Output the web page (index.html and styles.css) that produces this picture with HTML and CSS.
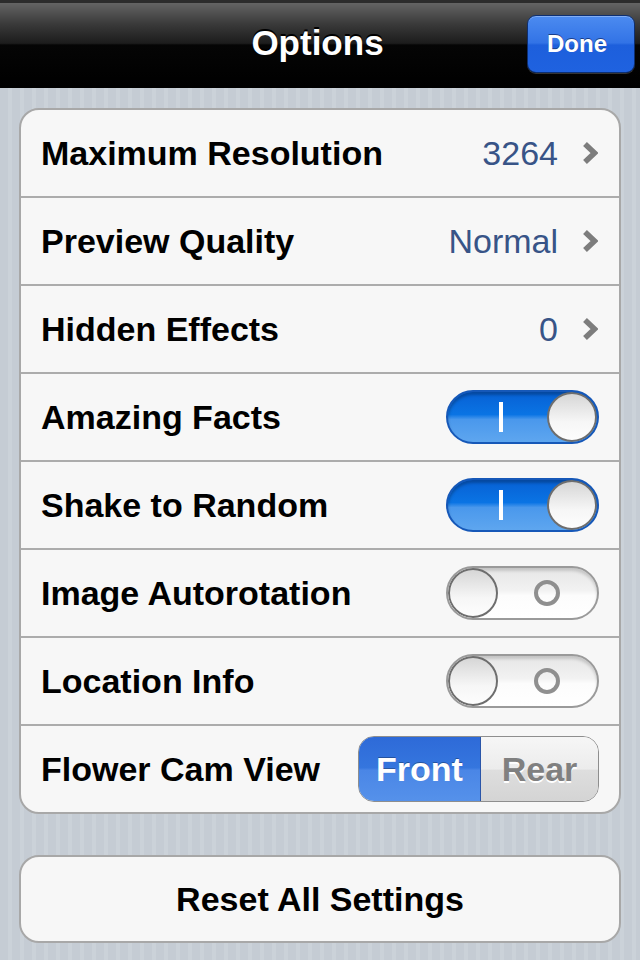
FILE: index.html
```html
<!DOCTYPE html>
<html lang="en">
<head>
<meta charset="utf-8">
<title>Options</title>
<link rel="stylesheet" href="styles.css">
</head>
<body>

<header class="navbar">
	<span></span>
	<h1 class="navbar-title">Options</h1>
	<button class="navbar-done">Done</button>
</header>

<main class="content">
	<ul class="group">
		<li class="row">
			<span class="row-label">Maximum Resolution</span>
			<span class="row-value">3264</span>
			<svg class="chevron" width="16" height="24" viewBox="0 0 16 24"><polyline points="3,3 12.5,12 3,21" fill="none" stroke="#7d7d7d" stroke-width="5.5"/></svg>
		</li>
		<li class="row">
			<span class="row-label">Preview Quality</span>
			<span class="row-value">Normal</span>
			<svg class="chevron" width="16" height="24" viewBox="0 0 16 24"><polyline points="3,3 12.5,12 3,21" fill="none" stroke="#7d7d7d" stroke-width="5.5"/></svg>
		</li>
		<li class="row">
			<span class="row-label">Hidden Effects</span>
			<span class="row-value">0</span>
			<svg class="chevron" width="16" height="24" viewBox="0 0 16 24"><polyline points="3,3 12.5,12 3,21" fill="none" stroke="#7d7d7d" stroke-width="5.5"/></svg>
		</li>
		<li class="row">
			<span class="row-label">Amazing Facts</span>
			<span class="switch on"><span class="switch-mark"></span><span class="switch-knob"></span></span>
		</li>
		<li class="row">
			<span class="row-label">Shake to Random</span>
			<span class="switch on"><span class="switch-mark"></span><span class="switch-knob"></span></span>
		</li>
		<li class="row">
			<span class="row-label">Image Autorotation</span>
			<span class="switch off"><span class="switch-knob"></span><span class="switch-mark"></span></span>
		</li>
		<li class="row">
			<span class="row-label">Location Info</span>
			<span class="switch off"><span class="switch-knob"></span><span class="switch-mark"></span></span>
		</li>
		<li class="row">
			<span class="row-label">Flower Cam View</span>
			<span class="segmented">
				<span class="segment selected">Front</span>
				<span class="segment">Rear</span>
			</span>
		</li>
	</ul>

	<button class="reset">Reset All Settings</button>
</main>

</body>
</html>
```

FILE: styles.css
```css
html, body {
	margin: 0;
	padding: 0;
}

body {
	width: 640px;
	height: 960px;
	overflow: hidden;
	font-family: "Liberation Sans", Arial, sans-serif;
	background: repeating-linear-gradient(90deg, #c5ccd4 0, #c5ccd4 8px, #cbd2d9 8px, #cbd2d9 12px);
}

/* black navigation bar */
.navbar {
	display: grid;
	grid-template-columns: 1fr auto 1fr;
	align-items: center;
	height: 88px;
	padding: 0 5px 0 0;
	box-sizing: border-box;
	border-top: 3px solid #2c2c2c;
	background: linear-gradient(#646464 0%, #3a3a3a 25%, #1c1c1c 48%, #050505 50%, #000 100%);
	border-bottom: 1px solid #000;
}

.navbar-title {
	margin: 0;
	color: #fff;
	font-size: 35px;
	font-weight: bold;
	text-shadow: 0 -2px 0 #000;
	padding-bottom: 4px;
}

.navbar-done {
	justify-self: end;
	width: 108px;
	height: 58px;
	margin-bottom: 3px;
	border: 1px solid #0d2f72;
	border-radius: 9px;
	background: linear-gradient(#4c8bf0 0%, #3273e6 48%, #1d5fdc 52%, #1f62e0 100%);
	box-shadow: 0 1px 0 rgba(255,255,255,0.2), inset 0 1px 0 rgba(255,255,255,0.3);
	color: #fff;
	font-family: "Liberation Sans", Arial, sans-serif;
	font-size: 24px;
	font-weight: bold;
	text-shadow: 0 -1px 0 #1a3e8a;
	padding: 0 8px 0 0;
}

.content {
	padding: 20px 19px 0 19px;
}

/* grouped table */
.group {
	list-style: none;
	margin: 0;
	padding: 0;
	background: #f7f7f7;
	border: 2px solid #a8a8a8;
	border-radius: 20px;
	overflow: hidden;
}

.row {
	display: flex;
	align-items: center;
	height: 86px;
	padding: 0 20px 0 20px;
	border-bottom: 2px solid #acacac;
}

.row:last-child {
	border-bottom: none;
}

.row-label {
	flex: 1;
	font-size: 34px;
	font-weight: bold;
	color: #000;
}

.row-value {
	font-size: 34px;
	color: #385487;
	margin-right: 24px;
}

.chevron {
	display: block;
	margin-right: 1px;
}

/* switches */
.switch {
	position: relative;
	display: flex;
	align-items: center;
	width: 149px;
	height: 50px;
	border: 2px solid #7a7a7a;
	border-radius: 27px;
	box-sizing: content-box;
	overflow: hidden;
}

.switch.on {
	border-color: #1658b8;
	background: linear-gradient(#0760d4 0%, #0a74e4 45%, #4a98ec 55%, #5ea6ef 100%);
	box-shadow: inset 0 3px 3px rgba(0,0,0,0.25);
}

.switch.off {
	border-color: #9a9a9a;
	background: linear-gradient(#e6e6e6 0%, #f2f2f2 45%, #fcfcfc 55%, #fff 100%);
	box-shadow: inset 0 3px 3px rgba(0,0,0,0.15);
}

.switch-knob {
	width: 50px;
	height: 50px;
	border-radius: 50%;
	box-sizing: border-box;
	border: 2px solid #6e6e6e;
	background: linear-gradient(#d6d6d6, #f6f6f6 60%, #fdfdfd);
}

.switch.on .switch-knob {
	margin-left: auto;
}

.switch.on .switch-mark {
	width: 4px;
	height: 30px;
	background: #fff;
	margin-left: 51px;
}

.switch.off .switch-mark {
	width: 26px;
	height: 26px;
	box-sizing: border-box;
	border: 4px solid #8f8f8f;
	border-radius: 50%;
	margin-left: 36px;
}

/* segmented control */
.segmented {
	display: flex;
	height: 64px;
	border: 1px solid #8e8e8e;
	border-radius: 16px;
	overflow: hidden;
}

.segment {
	display: flex;
	align-items: center;
	justify-content: center;
	font-size: 34px;
	font-weight: bold;
	color: #808080;
	text-shadow: 0 2px 0 #fff;
	background: linear-gradient(#f6f6f6 0%, #ececec 50%, #dedede 52%, #d4d4d4 100%);
	width: 117px;
}

.segment.selected {
	width: 121px;
	color: #fff;
	text-shadow: 0 -1px 0 rgba(0,0,0,0.3);
	background: linear-gradient(#2e6ad8 0%, #3576de 48%, #4a86e6 52%, #5591ea 100%);
	border-right: 1px solid #2a55a8;
}

/* reset button */
.reset {
	display: block;
	width: 100%;
	height: 88px;
	margin-top: 41px;
	background: #f7f7f7;
	border: 2px solid #a8a8a8;
	border-radius: 20px;
	font-family: "Liberation Sans", Arial, sans-serif;
	font-size: 34px;
	font-weight: bold;
	color: #000;
	padding: 0;
}
```
